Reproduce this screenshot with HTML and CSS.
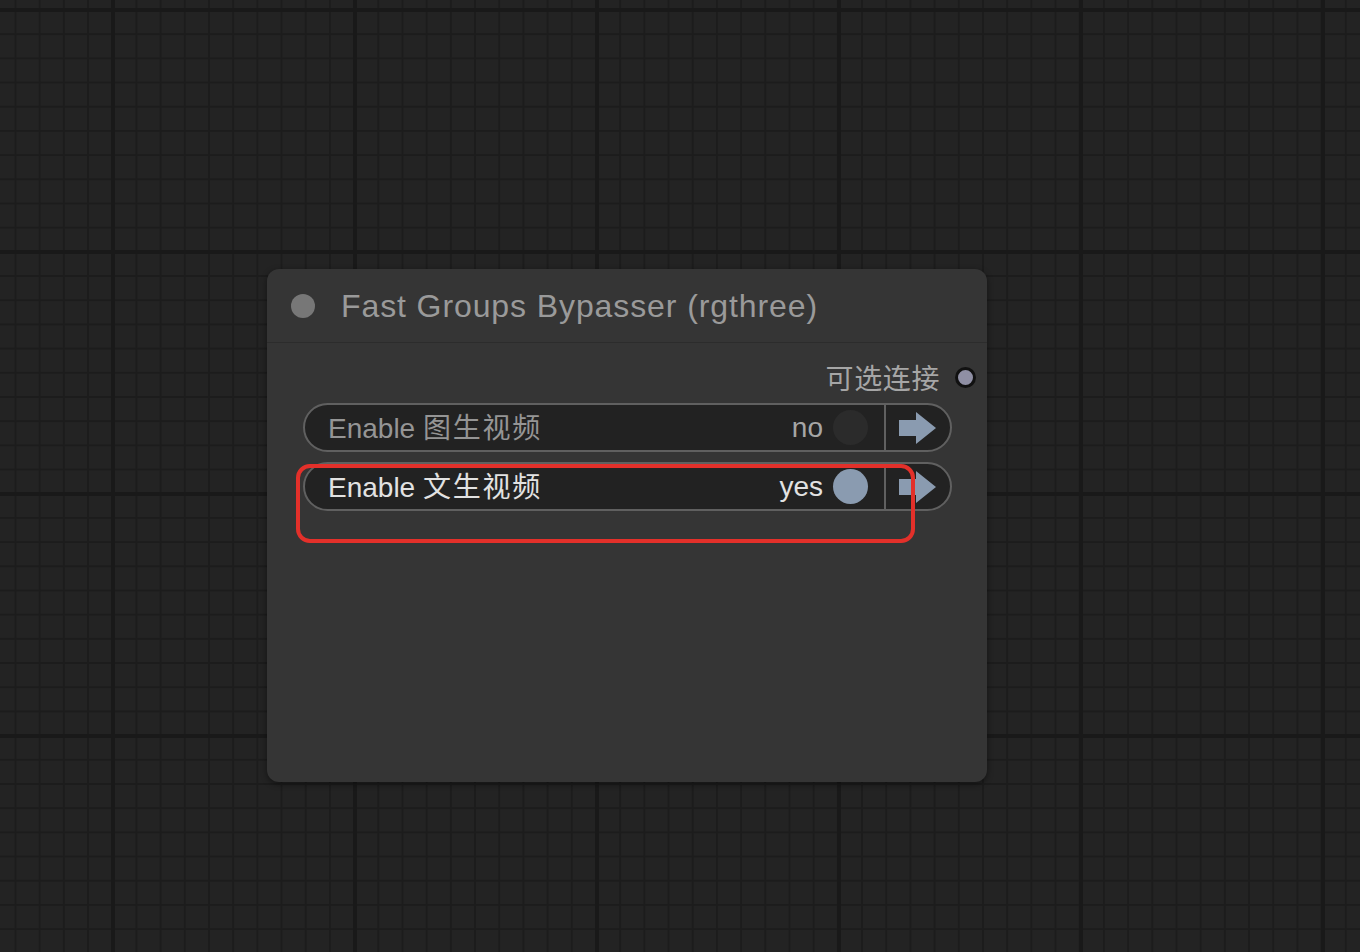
FILE: index.html
```html
<!DOCTYPE html>
<html>
<head>
<meta charset="utf-8">
<link rel="stylesheet" href="styles.css">
</head>
<body>
<div class="canvas">
  <div class="node">
    <div class="node-title">
      <span class="title-dot"></span>
      <span class="title-text">Fast Groups Bypasser (rgthree)</span>
    </div>
    <div class="outputs">
      <span class="output-label">可选连接</span>
      <span class="output-slot"></span>
    </div>
    <div class="widgets">
      <div class="toggle off">
        <div class="toggle-main">
          <span class="toggle-label">Enable <span class="cjk">图生视频</span></span>
          <span class="toggle-value">no</span>
          <span class="toggle-knob"></span>
        </div>
        <div class="toggle-nav">
          <svg width="38" height="32" viewBox="0 0 38 32"><path d="M0 8 H17 V0 L37 16 L17 32 V24 H0 Z" fill="#8a9bb0"/></svg>
        </div>
      </div>
      <div class="toggle on">
        <div class="toggle-main">
          <span class="toggle-label">Enable <span class="cjk">文生视频</span></span>
          <span class="toggle-value">yes</span>
          <span class="toggle-knob"></span>
        </div>
        <div class="toggle-nav">
          <svg width="38" height="32" viewBox="0 0 38 32"><path d="M0 8 H17 V0 L37 16 L17 32 V24 H0 Z" fill="#8a9bb0"/></svg>
        </div>
      </div>
    </div>
  </div>
  <div class="highlight"></div>
</div>
</body>
</html>
```
FILE: styles.css
```css
html, body {
  margin: 0;
  padding: 0;
}
body {
  width: 1360px;
  height: 952px;
  overflow: hidden;
  font-family: "Liberation Sans", "Noto Sans CJK SC", sans-serif;
}
.canvas {
  position: relative;
  width: 1360px;
  height: 952px;
  background-color: #232323;
  background-image:
    linear-gradient(to right, #191919 0, #191919 4px, transparent 4px),
    linear-gradient(to bottom, #191919 0, #191919 4px, transparent 4px),
    linear-gradient(to right, #1c1c1c 0, #1c1c1c 2px, transparent 2px),
    linear-gradient(to bottom, #1c1c1c 0, #1c1c1c 2px, transparent 2px);
  background-size: 242px 242px, 242px 242px, 24.2px 24.2px, 24.2px 24.2px;
  background-position: 111px 0, 0 8px, 14.5px 0, 0 9px;
}
.node {
  position: absolute;
  left: 267px;
  top: 269px;
  width: 720px;
  height: 513px;
  background: #353535;
  border-radius: 12px;
  box-shadow: 0 2px 6px rgba(0, 0, 0, 0.45);
  display: flex;
  flex-direction: column;
}
.node-title {
  height: 73px;
  border-bottom: 1px solid #2c2c2c;
  display: flex;
  align-items: center;
  padding-left: 24px;
  gap: 26px;
}
.title-dot {
  width: 24px;
  height: 24px;
  border-radius: 50%;
  background: #777;
}
.title-text {
  font-size: 32px;
  letter-spacing: 0.9px;
  color: #9a9a9a;
  line-height: 1;
}
.outputs {
  display: flex;
  justify-content: flex-end;
  align-items: center;
  height: 34px;
  margin-top: 17px;
  padding-right: 11px;
  gap: 15px;
}
.output-label {
  font-family: "Noto Sans CJK SC", sans-serif;
  font-size: 28px;
  letter-spacing: 0.6px;
  color: #a6a6a6;
  line-height: 1;
}
.output-slot {
  width: 15px;
  height: 15px;
  border-radius: 50%;
  background: #8f8fa4;
  border: 3px solid #111;
}
.widgets {
  display: flex;
  flex-direction: column;
  gap: 10px;
  margin-top: 9px;
  padding-left: 36px;
  width: 649px;
}
.toggle {
  height: 45px;
  border: 2px solid #606060;
  border-radius: 25px;
  background: #222;
  display: flex;
}
.toggle-main {
  flex: 1;
  display: flex;
  align-items: center;
  padding-left: 23px;
  padding-right: 16px;
}
.toggle-label {
  flex: 1;
  font-size: 28px;
  line-height: 1;
  font-family: "Liberation Sans", "Noto Sans CJK SC", sans-serif;
}
.cjk {
  font-family: "Noto Sans CJK SC", sans-serif;
  letter-spacing: 1.8px;
}
.toggle-value {
  font-size: 28px;
  line-height: 1;
  margin-right: 10px;
}
.toggle-knob {
  width: 35px;
  height: 35px;
  border-radius: 50%;
}
.off .toggle-label { color: #959595; }
.off .toggle-value { color: #a6a6a6; }
.off .toggle-knob { background: #2b2b2b; }
.on .toggle-label { color: #e2e2e2; }
.on .toggle-value { color: #e2e2e2; }
.on .toggle-knob { background: #8a9bb0; }
.toggle-nav {
  width: 66px;
  border-left: 2px solid #606060;
  display: flex;
  align-items: center;
  padding-left: 13px;
  box-sizing: border-box;
}
.highlight {
  position: absolute;
  left: 296px;
  top: 464px;
  width: 611px;
  height: 71px;
  border: 4px solid #e3302a;
  border-radius: 14px;
}
```
